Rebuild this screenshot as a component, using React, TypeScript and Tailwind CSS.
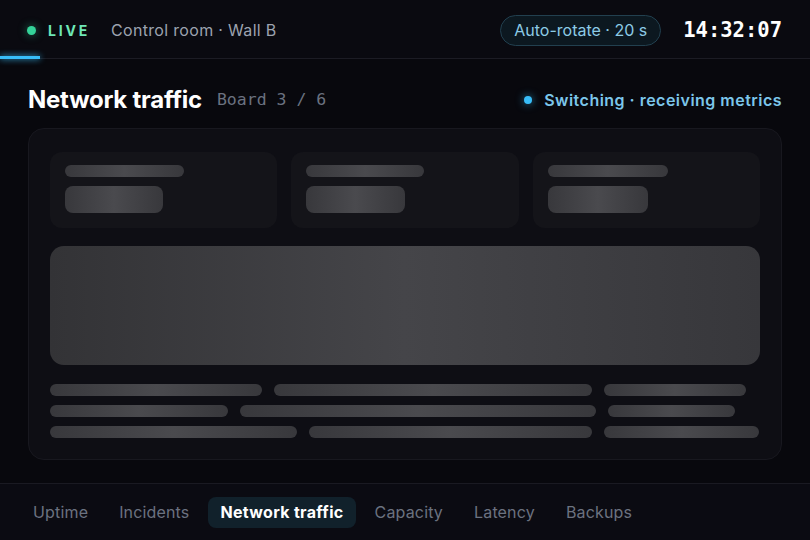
import React from "react";

const tabs = ["Uptime", "Incidents", "Network traffic", "Capacity", "Latency", "Backups"];

// widths of the skeleton text bars, per row
const rows = [
  [212, 318, 142],
  [178, 356, 127],
  [247, 283, 155],
];

const tiles = [
  { label: 119, value: 98 },
  { label: 118, value: 99 },
  { label: 120, value: 100 },
];

const shimmer = "bg-linear-to-r from-[#38383c] via-[#4a4a4e] to-[#38383c]";

const App: React.FC = () => {
  return (
    <div className="w-[810px] h-[540px] bg-[#08080d] flex flex-col font-['Inter',sans-serif] overflow-hidden">
      {/* Header */}
      <header className="relative h-[59px] shrink-0 border-b border-[#1c1c24] bg-[#0a0a10] flex items-center pt-[2px] pl-[27px] pr-[28px]">
        <span className="w-[9px] h-[9px] rounded-full bg-[#34d399] shadow-[0_0_8px_#34d39988]" />
        <span className="ml-[12px] text-[14px] font-bold tracking-[0.2em] text-[#6ee7b7]">LIVE</span>
        <span className="ml-[21px] text-[16px] tracking-[0.02em] text-[#9ca3af]">Control room · Wall B</span>
        <div className="ml-auto flex items-center">
          <span className="h-[31px] px-[13px] flex items-center rounded-full border border-[#22404f] bg-[#0c1820] text-[16px] text-[#8ccbe6]">
            Auto-rotate · 20 s
          </span>
          <span className="ml-[22px] text-[20.5px] font-bold text-white font-['DejaVu_Sans_Mono',monospace]">
            14:32:07
          </span>
        </div>
        <span className="absolute left-0 bottom-[-1px] w-[40px] h-[3px] bg-[#38bdf8] shadow-[0_0_6px_#38bdf8]" />
      </header>

      {/* Main */}
      <main className="flex-1 px-[28px] pt-[26px]">
        <div className="flex items-center h-[30px]">
          <h1 className="text-[24px] font-bold text-white tracking-[-0.01em]">Network traffic</h1>
          <span className="ml-[15px] text-[16.5px] text-[#6b7280] font-['DejaVu_Sans_Mono',monospace]">Board 3 / 6</span>
          <div className="ml-auto flex items-center">
            <span className="w-[8px] h-[8px] rounded-full bg-[#38bdf8] shadow-[0_0_8px_#38bdf8aa]" />
            <span className="ml-[12px] text-[16px] tracking-[0.03em] font-semibold text-[#7cc6ea]">Switching · receiving metrics</span>
          </div>
        </div>

        <div className="mt-[13px] rounded-[16px] border border-[#18181f] bg-[#0e0e14] pt-[23px] pb-[21px] px-[21px]">
          <div className="grid grid-cols-3 gap-[14px]">
            {tiles.map((t, i) => (
              <div key={i} className="h-[76px] rounded-[12px] bg-[#141419] pt-[13px] px-[15px]">
                <div className={`h-[12px] rounded-full ${shimmer}`} style={{ width: t.label }} />
                <div className={`mt-[9px] h-[27px] rounded-[8px] ${shimmer}`} style={{ width: t.value }} />
              </div>
            ))}
          </div>

          <div className="mt-[18px] h-[119px] rounded-[14px] bg-linear-to-r from-[#333336] via-[#454549] to-[#37373b]" />

          <div className="mt-[19px] flex flex-col gap-[9px]">
            {rows.map((r, i) => (
              <div key={i} className="flex gap-[12px]">
                {r.map((w, j) => (
                  <div key={j} className={`h-[12px] rounded-full ${shimmer}`} style={{ width: w }} />
                ))}
              </div>
            ))}
          </div>
        </div>
      </main>

      {/* Tabs */}
      <footer className="h-[57px] shrink-0 border-t border-[#1a1a22] bg-[#0b0b12] flex items-center pl-[21px] gap-[7px]">
        {tabs.map((t) => (
          <span
            key={t}
            className={
              t === "Network traffic"
                ? "h-[31px] px-[12px] flex items-center rounded-[8px] bg-[#11212b] text-[16px] tracking-[0.02em] font-bold text-white"
                : "h-[31px] px-[12px] flex items-center text-[16px] tracking-[0.01em] text-[#6b7280]"
            }
          >
            {t}
          </span>
        ))}
      </footer>
    </div>
  );
};

export default App;
